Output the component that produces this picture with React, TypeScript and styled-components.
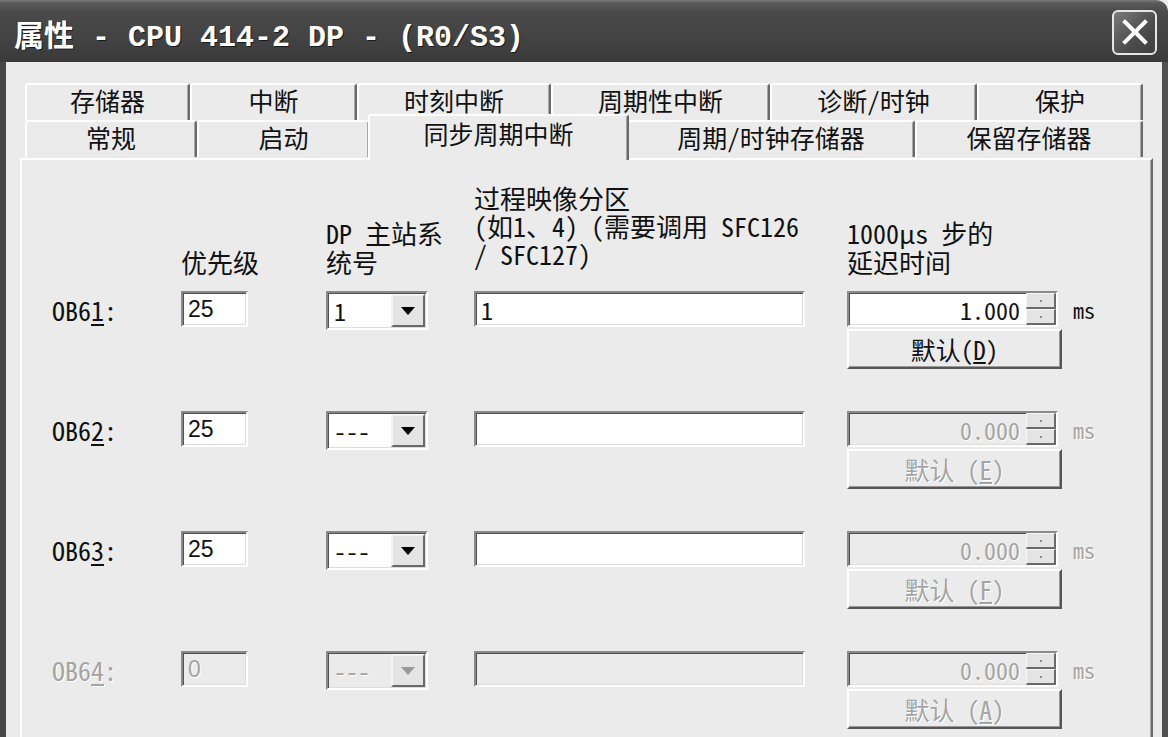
import React from 'react';
import styled, { createGlobalStyle } from 'styled-components';

const MONO = `"Noto Sans Mono CJK SC", "Liberation Mono", "Noto Sans CJK SC", monospace`;
const TITLE_FONT = `"Liberation Mono", "Noto Sans CJK SC", monospace`;

const GlobalStyle = createGlobalStyle`
  html, body {
    margin: 0;
    padding: 0;
    background: #ebebeb;
    overflow: hidden;
  }
  body {
    font-family: ${MONO};
    color: #111;
  }
`;

interface IObRow {
  ob: string;
  key: string;
  prio: string;
  dp: string;
  pi: string;
  delay: string;
  btn: string;
  btnSpace: boolean;
  enabled: boolean;
  delayEnabled: boolean;
}

const rows: IObRow[] = [
  { ob: 'OB6', key: '1', prio: '25', dp: '1', pi: '1', delay: '1.000', btn: 'D', btnSpace: false, enabled: true, delayEnabled: true },
  { ob: 'OB6', key: '2', prio: '25', dp: '---', pi: '', delay: '0.000', btn: 'E', btnSpace: true, enabled: true, delayEnabled: false },
  { ob: 'OB6', key: '3', prio: '25', dp: '---', pi: '', delay: '0.000', btn: 'F', btnSpace: true, enabled: true, delayEnabled: false },
  { ob: 'OB6', key: '4', prio: '0', dp: '---', pi: '', delay: '0.000', btn: 'A', btnSpace: true, enabled: false, delayEnabled: false },
];

const backTabs = [
  { text: '存储器', w: 165 },
  { text: '中断', w: 167 },
  { text: '时刻中断', w: 194 },
  { text: '周期性中断', w: 219 },
  { text: '诊断/时钟', w: 207 },
  { text: '保护', w: 166 },
];

const frontTabs = [
  { text: '常规', w: 172 },
  { text: '启动', w: 173 },
  { text: '同步周期中断', w: 257, active: true },
  { text: '周期/时钟存储器', w: 288 },
  { text: '保留存储器', w: 228 },
];

const headers: { lines: string[]; lift?: boolean }[] = [
  { lines: ['优先级'] },
  { lines: ['DP 主站系', '统号'] },
  { lines: ['过程映像分区', '(如1、4) (需要调用 SFC126', '/ SFC127)'], lift: true },
  { lines: ['1000μs 步的', '延迟时间'] },
];

const App = () => {
  return (
    <StyledWindow>
      <GlobalStyle />
      <StyledTitleBar>
        <StyledTitle>属性 - CPU 414-2 DP - (R0/S3)</StyledTitle>
        <StyledCloseButton>
          <svg width='28' height='28' viewBox='0 0 28 28'>
            <path d='M4 4 L24 24 M24 4 L4 24' stroke='#fff' strokeWidth='4' strokeLinecap='square' />
          </svg>
        </StyledCloseButton>
      </StyledTitleBar>
      <StyledBody>
        <StyledTabStrip>
          <StyledTabRow>
            {backTabs.map((t) => (
              <StyledTab key={t.text} $w={t.w}>
                {t.text}
              </StyledTab>
            ))}
          </StyledTabRow>
          <StyledTabRow>
            {frontTabs.map((t) => (
              <StyledTab key={t.text} $w={t.w} $active={t.active}>
                {t.text}
              </StyledTab>
            ))}
          </StyledTabRow>
        </StyledTabStrip>
        <StyledPanel>
          <StyledHeaderRow>
            <span />
            {headers.map((h) => (
              <StyledHeader key={h.lines[0]} $lift={h.lift}>
                {h.lines.map((l) => (
                  <StyledHeaderLine key={l} $lift={h.lift}>
                    {l}
                  </StyledHeaderLine>
                ))}
              </StyledHeader>
            ))}
          </StyledHeaderRow>
          <StyledRows>
            {rows.map((r) => (
              <StyledObRow key={r.key}>
                <StyledLabel $disabled={!r.enabled}>
                  {r.ob}
                  <u>{r.key}</u>:
                </StyledLabel>
                <StyledField $w={67} $disabled={!r.enabled}>
                  <StyledValue $sans $disabled={!r.enabled}>
                    {r.prio}
                  </StyledValue>
                </StyledField>
                <StyledCombo $disabled={!r.enabled}>
                  <StyledValue $disabled={!r.enabled}>{r.dp}</StyledValue>
                  <StyledDropButton>
                    <StyledArrow $disabled={!r.enabled} />
                  </StyledDropButton>
                </StyledCombo>
                <StyledField $w={331} $disabled={!r.enabled}>
                  <StyledValue $disabled={!r.enabled}>{r.pi}</StyledValue>
                </StyledField>
                <StyledDelayCell>
                  <StyledSpinLine>
                    <StyledField $w={211} $disabled={!r.delayEnabled} $spin>
                      <StyledSpinValue $disabled={!r.delayEnabled}>{r.delay}</StyledSpinValue>
                      <StyledSpinButtons>
                        <StyledSpinButton>
                          <StyledSpinDot />
                        </StyledSpinButton>
                        <StyledSpinButton>
                          <StyledSpinDot />
                        </StyledSpinButton>
                      </StyledSpinButtons>
                    </StyledField>
                    <StyledUnit $disabled={!r.delayEnabled}>ms</StyledUnit>
                  </StyledSpinLine>
                  <StyledButton $disabled={!r.delayEnabled}>
                    默认{r.btnSpace ? ' ' : ''}(<u>{r.btn}</u>)
                  </StyledButton>
                </StyledDelayCell>
              </StyledObRow>
            ))}
          </StyledRows>
        </StyledPanel>
      </StyledBody>
    </StyledWindow>
  );
};

const disabledText = `
  color: #a4a4a4;
  text-shadow: 1px 1px 0 #ffffff;
`;

const StyledWindow = styled.div`
  width: 1168px;
  height: 737px;
  display: flex;
  flex-direction: column;
  background: #ebebeb;
  overflow: hidden;
`;

const StyledTitleBar = styled.div`
  flex: none;
  height: 62px;
  box-sizing: border-box;
  display: flex;
  align-items: center;
  justify-content: space-between;
  padding: 4px 11px 0 14px;
  background: linear-gradient(#7a7a7a 0px, #5a5a5a 3px, #4a4a4a 12px, #424242 40px, #3a3a3a 62px);
  border-top-right-radius: 12px;
`;

const StyledTitle = styled.div`
  color: #fff;
  font-family: ${TITLE_FONT};
  font-size: 30px;
  font-weight: bold;
  white-space: pre;
  text-shadow: 1px 1px 0 #1a1a1a;
`;

const StyledCloseButton = styled.div`
  width: 45px;
  height: 45px;
  box-sizing: border-box;
  margin-top: -2px;
  border: 2px solid #e6e6e6;
  border-radius: 6px;
  background: linear-gradient(135deg, #7a7a7a, #4c4c4c 60%, #3e3e3e);
  display: flex;
  align-items: center;
  justify-content: center;
`;

const StyledBody = styled.div`
  flex: 1;
  display: flex;
  flex-direction: column;
  padding: 21px 9px 0 14px;
  border-left: 6px solid #474747;
  border-right: 6px solid #505050;
  min-height: 0;
`;

const StyledTabStrip = styled.div`
  display: flex;
  flex-direction: column;
  padding-left: 5px;
`;

const StyledTabRow = styled.div`
  display: flex;
  height: 37px;
  & + & {
    height: 38px;
  }
`;

const StyledTab = styled.div<{ $w: number; $active?: boolean }>`
  position: relative;
  flex: none;
  width: ${(p) => p.$w + (p.$active ? 4 : 0)}px;
  height: ${(p) => (p.$active ? 46 : 37)}px;
  margin-top: ${(p) => (p.$active ? -6 : 0)}px;
  margin-left: ${(p) => (p.$active ? -2 : 0)}px;
  margin-right: ${(p) => (p.$active ? -2 : 0)}px;
  z-index: ${(p) => (p.$active ? 2 : 1)};
  box-sizing: border-box;
  display: flex;
  align-items: center;
  justify-content: center;
  padding-bottom: ${(p) => (p.$active ? 10 : 5)}px;
  background: #ebebeb;
  border-top: 2px solid #ffffff;
  border-left: 2px solid #ffffff;
  border-right: 2px solid #6a6a6a;
  box-shadow: inset -1px 0 0 #a8a8a8;
  border-radius: 3px 3px 0 0;
  font-size: 25px;
  font-weight: 500;
  color: #111;
  white-space: pre;
`;

const StyledPanel = styled.div`
  flex: 1;
  box-sizing: border-box;
  padding: 24px 0 0 30px;
  border-top: 2px solid #ffffff;
  border-left: 2px solid #ffffff;
  border-right: 2px solid #6a6a6a;
  box-shadow: inset -1px 0 0 #a8a8a8;
`;

const columns = '129px 145px 148px 373px 1fr';

const StyledHeaderRow = styled.div`
  display: grid;
  grid-template-columns: ${columns};
  align-items: end;
  height: 92px;
`;

const StyledHeader = styled.div<{ $lift?: boolean }>`
  display: flex;
  flex-direction: column;
  margin-bottom: ${(p) => (p.$lift ? 8 : 0)}px;
`;

const StyledHeaderLine = styled.div<{ $lift?: boolean }>`
  height: ${(p) => (p.$lift ? 28 : 29)}px;
  display: flex;
  align-items: center;
  font-size: 26px;
  line-height: 1;
  font-weight: 500;
  white-space: pre;
`;

const StyledRows = styled.div`
  display: flex;
  flex-direction: column;
  margin-top: 15px;
`;

const StyledObRow = styled.div`
  display: grid;
  grid-template-columns: ${columns};
  align-items: start;
  height: 120px;
`;

const StyledLabel = styled.div<{ $disabled?: boolean }>`
  height: 36px;
  display: flex;
  align-items: center;
  font-size: 26px;
  ${(p) => (p.$disabled ? disabledText : '')}
  u {
    text-underline-offset: 3px;
  }
`;

const StyledField = styled.div<{ $w: number; $disabled?: boolean; $spin?: boolean }>`
  width: ${(p) => p.$w}px;
  height: 36px;
  box-sizing: border-box;
  display: flex;
  align-items: center;
  padding-left: ${(p) => (p.$spin ? 0 : 3)}px;
  border-style: solid;
  border-width: 2px;
  border-color: #8a8a8a #ffffff #ffffff #8a8a8a;
  box-shadow: inset 1px 1px 0 #505050, inset -1px -1px 0 #dcdcdc;
  background: ${(p) => (p.$disabled ? '#ebebeb' : '#ffffff')};
`;

const StyledValue = styled.span<{ $sans?: boolean; $disabled?: boolean }>`
  font-family: ${(p) => (p.$sans ? '"Liberation Sans", Arial, sans-serif' : MONO)};
  font-size: ${(p) => (p.$sans ? 23 : 24)}px;
  padding-left: 2px;
  flex: 1;
  ${(p) => (p.$disabled ? disabledText : '')}
`;

const StyledCombo = styled.div<{ $disabled?: boolean }>`
  width: 102px;
  height: 39px;
  box-sizing: border-box;
  display: flex;
  align-items: center;
  padding: 0 1px 0 4px;
  border-style: solid;
  border-width: 2px;
  border-color: #8a8a8a #ffffff #ffffff #8a8a8a;
  box-shadow: inset 1px 1px 0 #505050, inset -1px -1px 0 #dcdcdc;
  background: ${(p) => (p.$disabled ? '#ebebeb' : '#ffffff')};
`;

const StyledDropButton = styled.div`
  width: 34px;
  height: 33px;
  box-sizing: border-box;
  display: flex;
  align-items: center;
  justify-content: center;
  background: #e4e4e4;
  border-style: solid;
  border-width: 2px;
  border-color: #f4f4f4 #6a6a6a #6a6a6a #f4f4f4;
`;

const StyledArrow = styled.div<{ $disabled?: boolean }>`
  width: 0;
  height: 0;
  border-left: 7px solid transparent;
  border-right: 7px solid transparent;
  border-top: 8px solid ${(p) => (p.$disabled ? '#9a9a9a' : '#000')};
`;

const StyledDelayCell = styled.div`
  display: flex;
  flex-direction: column;
  align-items: flex-start;
`;

const StyledSpinLine = styled.div`
  display: flex;
  align-items: center;
  gap: 15px;
`;

const StyledSpinValue = styled.span<{ $disabled?: boolean }>`
  flex: 1;
  text-align: right;
  font-size: 24px;
  padding-right: 6px;
  ${(p) => (p.$disabled ? disabledText : '')}
`;

const StyledSpinButtons = styled.div`
  width: 30px;
  height: 32px;
  display: flex;
  flex-direction: column;
`;

const StyledSpinButton = styled.div`
  flex: 1;
  box-sizing: border-box;
  display: flex;
  align-items: center;
  justify-content: center;
  background: #e4e4e4;
  border-style: solid;
  border-width: 1px 2px 2px 1px;
  border-color: #f6f6f6 #6a6a6a #6a6a6a #f6f6f6;
`;

const StyledSpinDot = styled.div`
  width: 2px;
  height: 2px;
  background: #8a8a8a;
`;

const StyledUnit = styled.span<{ $disabled?: boolean }>`
  font-size: 22px;
  ${(p) => (p.$disabled ? disabledText : '')}
`;

const StyledButton = styled.div<{ $disabled?: boolean }>`
  width: 215px;
  height: 40px;
  margin-top: 2px;
  box-sizing: border-box;
  display: flex;
  align-items: center;
  justify-content: center;
  font-size: 25px;
  font-weight: 500;
  white-space: pre;
  background: #ebebeb;
  border-style: solid;
  border-width: 2px;
  border-color: #ffffff #555555 #555555 #ffffff;
  box-shadow: inset -1px -1px 0 #9a9a9a;
  ${(p) => (p.$disabled ? disabledText : '')}
`;

export default App;
